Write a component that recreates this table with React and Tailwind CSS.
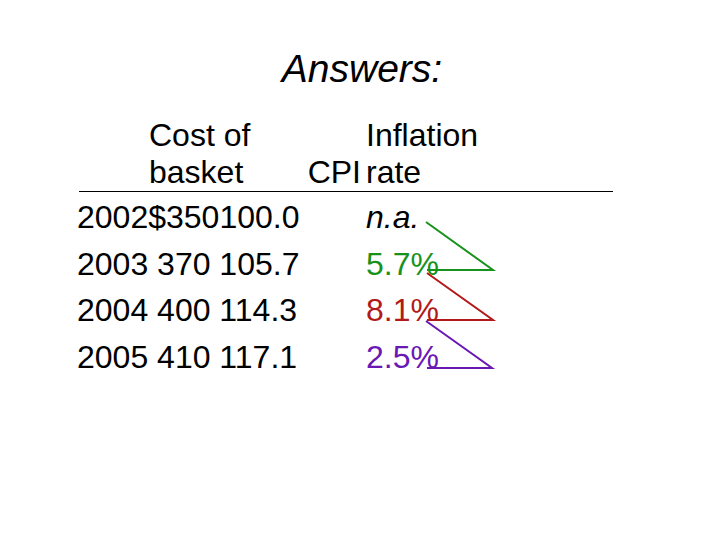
const rows = [
  { left: '2002$350100.0', rate: 'n.a.', color: 'text-black', italic: true },
  { left: '2003 370 105.7', rate: '5.7%', color: 'text-[#18921c]' },
  { left: '2004 400 114.3', rate: '8.1%', color: 'text-[#b21a1a]' },
  { left: '2005 410 117.1', rate: '2.5%', color: 'text-[#6a18b4]' },
]

const arrows = [
  { d: 'M426 222 L493 270 L427 270', color: '#18921c' },
  { d: 'M427 273 L493 320 L427 320', color: '#b21a1a' },
  { d: 'M426 321 L492 368 L427 368', color: '#6a18b4' },
]

export default function App() {
  return (
    <div className="relative w-[720px] h-[540px] bg-white text-black font-['Liberation_Sans',Arial,sans-serif] overflow-hidden">
      <div className="pt-[46px] pl-[4px]">
        <h1 className="text-center italic text-[39px] leading-[46px] font-normal">Answers:</h1>
      </div>

      <div className="mt-[25px] pl-[77px] text-[32px] leading-[37px]">
        <div className="flex">
          <div className="w-[289px] pl-[72px]">Cost of</div>
          <div>Inflation</div>
        </div>
        <div className="flex">
          <div className="w-[289px] pl-[72px] pr-[5px] flex justify-between">
            <span>basket</span>
            <span>CPI</span>
          </div>
          <div>rate</div>
        </div>
      </div>

      <div className="ml-[79px] w-[534px] h-px bg-black" />

      <div className="mt-[2px] pl-[77px] text-[32px] leading-[46.7px]">
        {rows.map((r) => (
          <div key={r.left} className="flex">
            <div className="w-[289px] whitespace-pre">{r.left}</div>
            <div className={`${r.color} ${r.italic ? 'italic' : ''}`}>{r.rate}</div>
          </div>
        ))}
      </div>

      <svg className="absolute inset-0 pointer-events-none" width="720" height="540">
        {arrows.map((a) => (
          <path key={a.d} d={a.d} fill="none" stroke={a.color} strokeWidth="2" />
        ))}
      </svg>
    </div>
  )
}
